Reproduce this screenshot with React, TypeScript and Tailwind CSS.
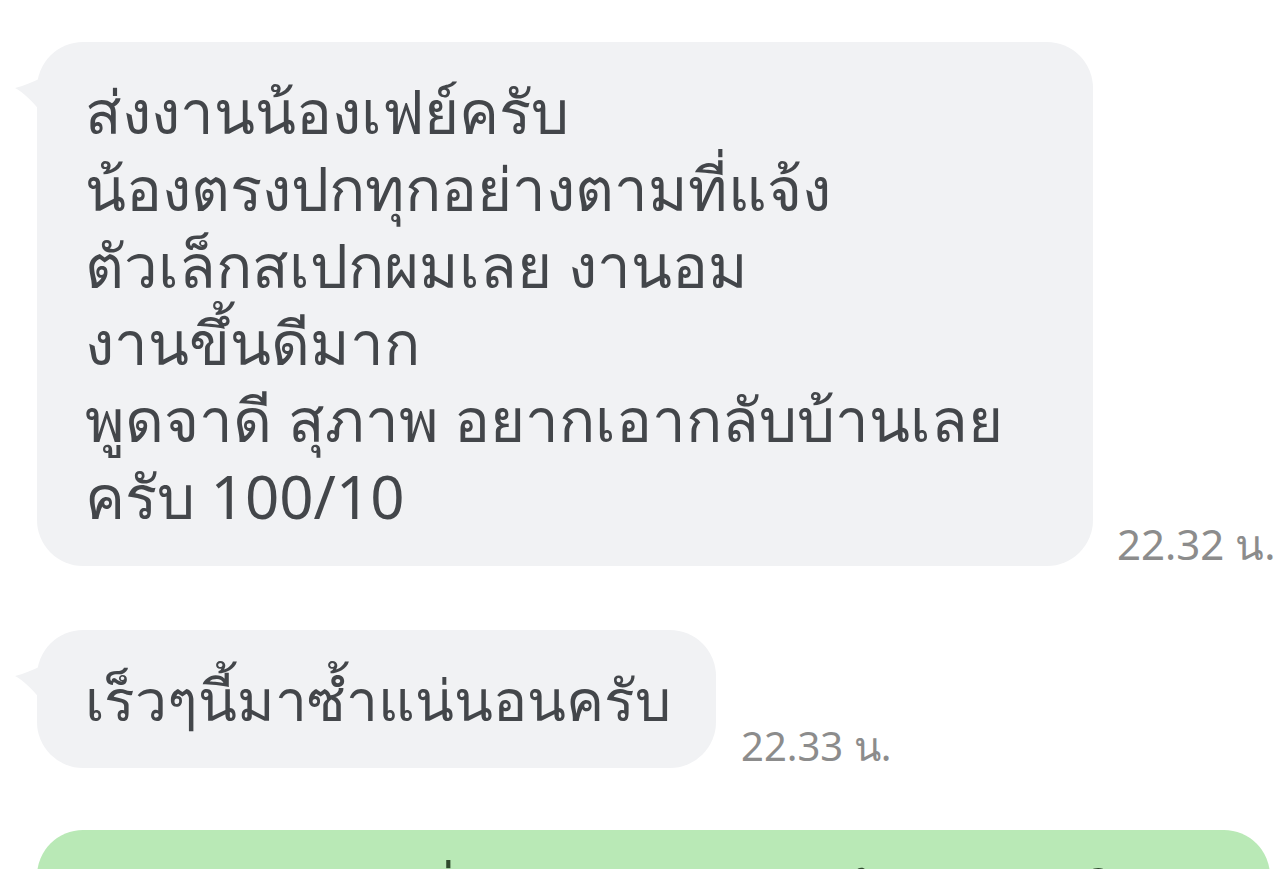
const Tail = () => (
  <svg
    className="absolute -left-[22px] top-[34px]"
    width="26"
    height="40"
    viewBox="0 0 26 40"
  >
    <path d="M26 2 C18 6 8 10 0 12 C8 16 18 26 26 36 Z" fill="#f1f2f4" />
  </svg>
);

const App = () => {
  return (
    <div
      className="w-[1280px] h-[869px] overflow-hidden bg-white pt-[42px]"
      style={{ fontFamily: '"Noto Sans", "DejaVu Sans", sans-serif' }}
    >
      {/* message 1 */}
      <div className="flex items-end pl-[37px]">
        <div className="relative w-[1056px] h-[524px] rounded-[46px] bg-[#f1f2f4] pl-[48px] pt-[31px]">
          <Tail />
          <p className="text-[60px] leading-[77px] text-[#43464a] whitespace-pre-line">
            {"ส่งงานน้องเฟย์ครับ\nน้องตรงปกทุกอย่างตามที่แจ้ง\nตัวเล็กสเปกผมเลย งานอม\nงานขึ้นดีมาก\nพูดจาดี สุภาพ อยากเอากลับบ้านเลย\nครับ 100/10"}
          </p>
        </div>
        <span className="ml-[24px] -mb-[2px] text-[42px] leading-[48px] text-[#8c8c8c]">
          22.32 น.
        </span>
      </div>

      {/* message 2 */}
      <div className="flex items-end pl-[37px] mt-[64px]">
        <div className="relative h-[138px] rounded-[46px] bg-[#f1f2f4] pl-[48px] pr-[45px] flex items-center">
          <Tail />
          <p className="text-[57px] leading-[77px] text-[#43464a]">
            เร็วๆนี้มาซ้ำแน่นอนครับ
          </p>
        </div>
        <span className="ml-[25px] -mb-[2px] text-[40px] leading-[48px] text-[#8c8c8c]">
          22.33 น.
        </span>
      </div>

      {/* message 3 (own, cut off) */}
      <div className="pl-[37px] pr-[10px] mt-[62px]">
        <div className="h-[140px] rounded-[46px] bg-[#b9e9b6] pl-[26px] pt-[31px]">
          <p className="text-[60px] leading-[77px] text-[#2f4a2d] whitespace-nowrap">
            ขอบคุณมากๆที่มาอุดหนุนงาน ไปเจอกันใหม่นะครับ
          </p>
        </div>
      </div>
    </div>
  );
};

export default App;
